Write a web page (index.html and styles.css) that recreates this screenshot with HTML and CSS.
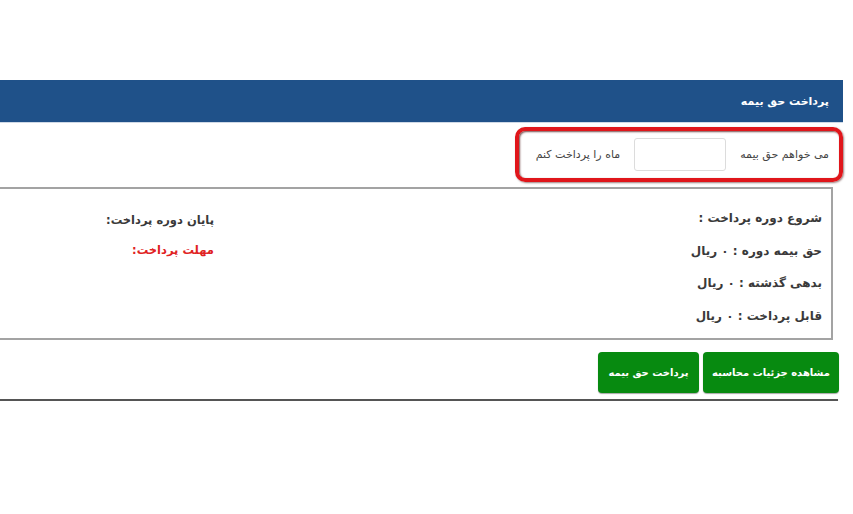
FILE: index.html
```html
<!DOCTYPE html>
<html lang="fa">
<head>
<meta charset="utf-8">
<title>پرداخت حق بیمه</title>
<link rel="stylesheet" href="styles.css">
</head>
<body>
<div class="panel" dir="rtl">
  <div class="panel-head">پرداخت حق بیمه</div>
  <div class="month-row">
    <span class="month-label">می خواهم حق بیمه</span>
    <input class="month-input" type="text">
    <span class="month-label">ماه را پرداخت کنم</span>
  </div>
  <div class="info-box">
    <div class="info-col">
      <div class="info-line">شروع دوره پرداخت :</div>
      <div class="info-line">حق بیمه دوره : ۰ ریال</div>
      <div class="info-line">بدهی گذشته : ۰ ریال</div>
      <div class="info-line">قابل پرداخت : ۰ ریال</div>
    </div>
    <div class="info-col info-col-small">
      <div class="info-line">پایان دوره پرداخت:</div>
      <div class="info-line info-red">مهلت پرداخت:</div>
    </div>
  </div>
  <div class="actions">
    <button class="btn btn-wide" type="button">مشاهده جزئیات محاسبه</button>
    <button class="btn" type="button">پرداخت حق بیمه</button>
  </div>
  <div class="panel-rule"></div>
</div>
</body>
</html>
```
FILE: styles.css
```css
html, body {
  margin: 0;
  padding: 0;
  background: #ffffff;
}

body {
  font-family: "DejaVu Sans", "Noto Sans", sans-serif;
  color: #333333;
}

.panel {
  width: 843px;
  margin-top: 80px;
}

.panel-head {
  height: 43px;
  line-height: 43px;
  background: #1f5189;
  color: #ffffff;
  font-size: 11px;
  font-weight: bold;
  padding-right: 14px;
  border-bottom: 1px solid #cfd9e6;
  box-sizing: border-box;
}

.month-row {
  width: 328px;
  height: 55px;
  margin-top: 4px;
  box-sizing: border-box;
  border: 4px solid #e0161b;
  border-radius: 10px;
  box-shadow: inset 1px 1px 2px rgba(60, 0, 0, 0.7), 1px 1px 2px rgba(60, 0, 0, 0.5);
  display: flex;
  align-items: center;
  padding-right: 10px;
  gap: 14px;
  font-size: 11px;
  color: #444444;
}

.month-input {
  width: 92px;
  height: 33px;
  box-sizing: border-box;
  border: 1px solid #dcdcdc;
  border-radius: 3px;
  background: #ffffff;
  padding: 0;
  margin: 0;
}

.info-box {
  margin-top: 5px;
  margin-right: 10px;
  margin-left: -4px;
  height: 153px;
  box-sizing: border-box;
  border: 2px solid #a3a3a3;
  display: grid;
  grid-template-columns: 608px 1fr;
  padding: 22px 9px 0 0;
}

.info-col {
  display: flex;
  flex-direction: column;
}

.info-line {
  height: 32.5px;
  font-size: 12px;
  font-weight: bold;
  color: #3a3a3a;
}

.info-col-small .info-line {
  height: 30px;
  font-size: 11.5px;
  padding-top: 2px;
  box-sizing: border-box;
}

.info-red {
  color: #e02323;
}

.actions {
  display: flex;
  gap: 4px;
  margin-top: 12px;
  margin-right: 4px;
}

.btn {
  height: 41px;
  width: 101px;
  border: none;
  border-radius: 4px;
  background: #078a10;
  color: #ffffff;
  font-family: "DejaVu Sans", sans-serif;
  font-size: 10px;
  font-weight: bold;
  padding: 0;
  margin: 0;
  box-shadow: 0 1px 1px rgba(0, 0, 0, 0.35);
}

.btn-wide {
  width: 136px;
}

.panel-rule {
  height: 2px;
  margin-top: 6px;
  margin-right: 5px;
  background: #555555;
  box-shadow: 0 1px 1px #bbbbbb;
}
```
